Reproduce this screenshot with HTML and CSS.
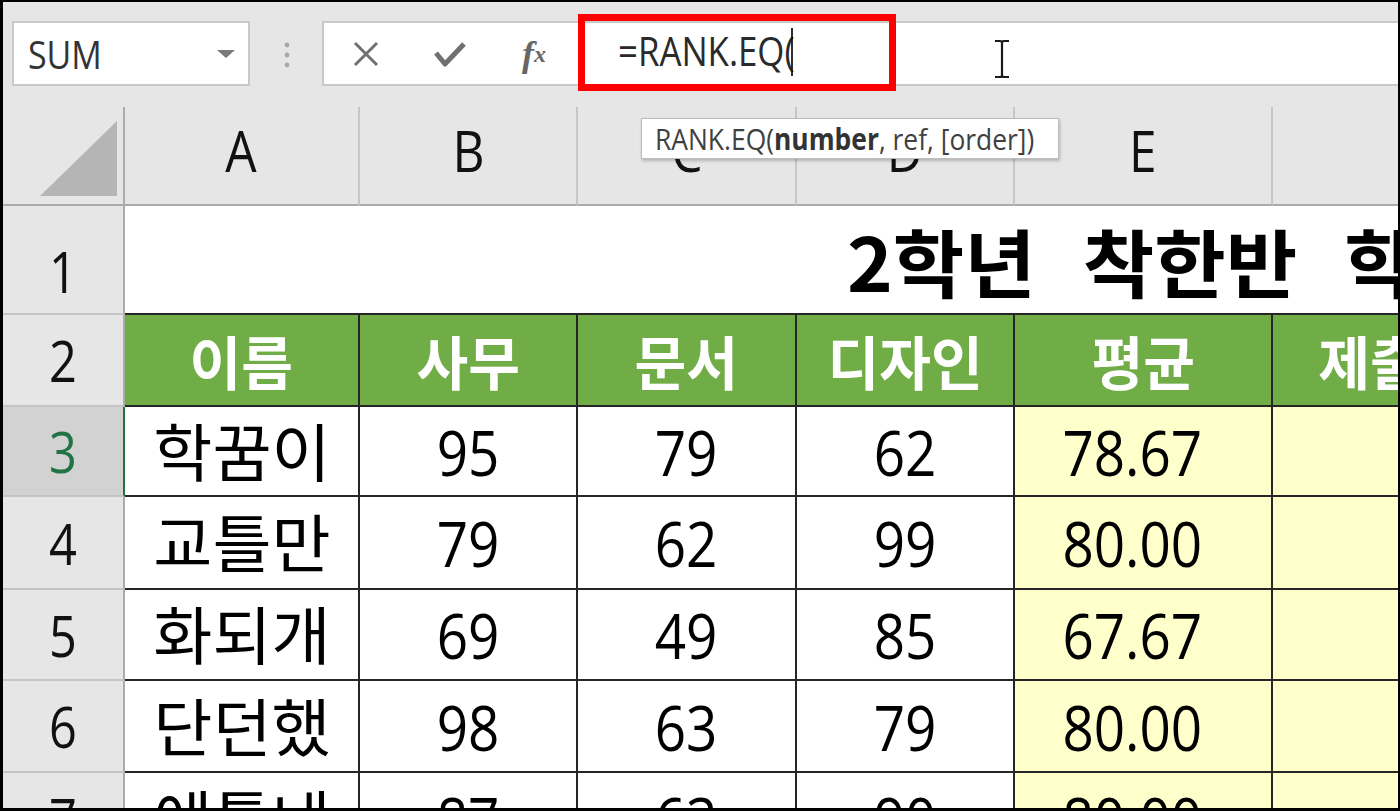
FILE: index.html
```html
<!DOCTYPE html>
<html lang="ko">
<head>
<meta charset="utf-8">
<title>RANK.EQ</title>
<link rel="stylesheet" href="styles.css">
</head>
<body>
<div class="frame">
  <div class="toolbar">
    <div class="namebox">
      <span class="t tl">SUM</span>
      <svg class="dd" width="18" height="8" viewBox="0 0 18 8"><path d="M0 0H18L9 8Z" fill="#7a7a7a"/></svg>
    </div>
    <svg class="grip" width="8" height="26" viewBox="0 0 8 26"><circle cx="4" cy="3" r="2.4"/><circle cx="4" cy="13" r="2.4"/><circle cx="4" cy="23" r="2.4"/></svg>
    <div class="fbar">
      <div class="fbtn"><svg width="28" height="26" viewBox="0 0 28 26"><path d="M3 2L25 24M25 2L3 24" stroke="#707070" stroke-width="3" fill="none"/></svg></div>
      <div class="fbtn"><svg width="34" height="28" viewBox="0 0 34 28"><path d="M3 13L12 24L31 4" stroke="#707070" stroke-width="5" fill="none" stroke-linejoin="round"/></svg></div>
      <div class="fbtn fx"><i>f</i><sub>x</sub></div>
      <div class="finput"><span class="t tl">=RANK.EQ(<span class="caret"></span></span></div>
    </div>
  </div>
  <div class="sheet">
    <div class="corner"><svg width="120" height="97" viewBox="0 0 120 97"><path d="M37 89H114V14Z" fill="#b5b5b5"/></svg></div>
    <div class="ch"><span class="t">A</span></div>
    <div class="ch"><span class="t">B</span></div>
    <div class="ch"><span class="t">C</span></div>
    <div class="ch"><span class="t">D</span></div>
    <div class="ch"><span class="t">E</span></div>
    <div class="ch"><span class="t">F</span></div>

    <div class="rh r1"><span class="t">1</span></div>
    <div class="title"><span class="tt">2학년 착한반 학생 성적표</span></div>

    <div class="rh"><span class="t">2</span></div>
    <div class="hd"><span class="t">이름</span></div>
    <div class="hd"><span class="t">사무</span></div>
    <div class="hd"><span class="t">문서</span></div>
    <div class="hd"><span class="t">디자인</span></div>
    <div class="hd"><span class="t">평균</span></div>
    <div class="hd hl"><span class="t">제출여부</span></div>

    <div class="rh sel"><span class="t">3</span></div>
    <div class="c name"><span class="t">학꿈이</span></div>
    <div class="c"><span class="t">95</span></div>
    <div class="c"><span class="t">79</span></div>
    <div class="c"><span class="t">62</span></div>
    <div class="c y avg"><span class="t">78.67</span></div>
    <div class="c y"></div>

    <div class="rh"><span class="t">4</span></div>
    <div class="c name"><span class="t">교틀만</span></div>
    <div class="c"><span class="t">79</span></div>
    <div class="c"><span class="t">62</span></div>
    <div class="c"><span class="t">99</span></div>
    <div class="c y avg"><span class="t">80.00</span></div>
    <div class="c y"></div>

    <div class="rh"><span class="t">5</span></div>
    <div class="c name"><span class="t">화되개</span></div>
    <div class="c"><span class="t">69</span></div>
    <div class="c"><span class="t">49</span></div>
    <div class="c"><span class="t">85</span></div>
    <div class="c y avg"><span class="t">67.67</span></div>
    <div class="c y"></div>

    <div class="rh"><span class="t">6</span></div>
    <div class="c name"><span class="t">단던했</span></div>
    <div class="c"><span class="t">98</span></div>
    <div class="c"><span class="t">63</span></div>
    <div class="c"><span class="t">79</span></div>
    <div class="c y avg"><span class="t">80.00</span></div>
    <div class="c y"></div>

    <div class="rh"><span class="t">7</span></div>
    <div class="c name"><span class="t">에틀네</span></div>
    <div class="c"><span class="t">87</span></div>
    <div class="c"><span class="t">63</span></div>
    <div class="c"><span class="t">90</span></div>
    <div class="c y avg"><span class="t">80.00</span></div>
    <div class="c y"></div>
  </div>

  <div class="redbox"></div>
  <div class="tip"><span class="t tl">RANK.EQ(<b>number</b>, ref, [order])</span></div>
  <svg class="ibeam" width="18" height="40" viewBox="0 0 18 40"><path d="M2 2H7Q9 2 9 4Q9 2 11 2H16M9 4V36M2 38H7Q9 38 9 36Q9 38 11 38H16" stroke="#1a1a1a" stroke-width="2.2" fill="none"/></svg>
</div>
</body>
</html>
```

FILE: styles.css
```css
* { box-sizing: border-box; }
html, body { margin: 0; padding: 0; background: #000; }
body {
  width: 1400px;
  height: 811px;
  overflow: hidden;
  font-family: "Open Sans", "Noto Sans CJK KR", sans-serif;
  color: #111;
}
.frame {
  position: relative;
  width: 1400px;
  height: 811px;
  border-style: solid;
  border-color: #000;
  border-width: 2px 2px 3px 3px;
  background: #e6e6e6;
  overflow: hidden;
  display: flex;
  flex-direction: column;
}
.t { display: inline-block; transform: scaleX(.87); white-space: nowrap; }
.tl { transform-origin: left center; }

/* toolbar */
.toolbar {
  flex: none;
  height: 105px;
  display: flex;
  align-items: flex-start;
  padding: 19px 0 0 9px;
}
.namebox {
  flex: none;
  width: 238px;
  height: 65px;
  background: #fff;
  border: 2px solid #c9c9c9;
  display: flex;
  align-items: center;
  justify-content: space-between;
  padding: 0 13px 0 14px;
  font-size: 39px;
  line-height: 1;
  color: #333;
}
.dd { flex: none; }
.grip { flex: none; margin: 21px 0 0 33px; fill: #a8a8a8; }
.fbar {
  flex: 1;
  margin-left: 31px;
  height: 65px;
  background: #fff;
  border: 2px solid #c9c9c9;
  border-right: none;
  display: flex;
  align-items: center;
}
.fbtn {
  flex: none;
  width: 84px;
  display: flex;
  justify-content: center;
  align-items: center;
}
.fx {
  font-family: "Liberation Serif", "DejaVu Serif", serif;
  color: #666;
  font-size: 36px;
  font-weight: 700;
  line-height: 1;
}
.fx i { font-style: italic; }
.fx sub { font-style: italic; font-size: 24px; vertical-align: -1px; margin-left: 0; }
.finput {
  padding-left: 42px;
  font-size: 40px;
  line-height: 1;
  color: #2a2a2a;
  display: flex;
  align-items: center;
}
.caret {
  display: inline-block;
  width: 2px;
  height: 48px;
  background: #111;
  vertical-align: middle;
  margin-left: -4px;
  margin-top: -8px;
}

/* sheet grid */
.sheet {
  flex: none;
  display: grid;
  grid-template-columns: 122px 235px 218px 219px 218px 258px 300px;
  grid-template-rows: 99px 109px 92px 90px 93px 91px 92px 92px;
  line-height: 1;
}
.corner {
  border-right: 2px solid #ababab;
  border-bottom: 2px solid #ababab;
}
.corner svg { display: block; }
.ch {
  display: flex;
  align-items: center;
  justify-content: center;
  padding-bottom: 10px;
  font-size: 57px;
  color: #111;
  border-right: 2px solid #c6c6c6;
  border-bottom: 2px solid #ababab;
}
.rh {
  display: flex;
  align-items: center;
  justify-content: center;
  font-size: 56px;
  color: #111;
  border-right: 2px solid #ababab;
  border-bottom: 2px solid #c4c4c4;
}
.rh.r1 { align-items: flex-end; padding-bottom: 14px; }
.rh.sel {
  background: #d2d2d2;
  color: #217346;
  border-right-color: #217346;
}
.title {
  grid-column: 2 / 8;
  background: #fff;
  border-bottom: 2px solid #262626;
  display: flex;
  align-items: center;
  padding-left: 722px;
  font-family: "Noto Sans CJK KR", sans-serif;
  font-weight: 700;
  font-size: 74px;
  color: #000;
  white-space: nowrap;
  overflow: hidden;
}
.tt {
  display: inline-block;
  transform: scaleX(1.05);
  transform-origin: left center;
  word-spacing: 24px;
}
.hd {
  background: #70ad47;
  color: #fff;
  font-family: "Noto Sans CJK KR", sans-serif;
  font-weight: 700;
  font-size: 58px;
  display: flex;
  align-items: center;
  justify-content: center;
  border-right: 2px solid #262626;
  border-bottom: 2px solid #262626;
  overflow: hidden;
  white-space: nowrap;
}
.hd .t { transform: scaleX(.97); }
.c {
  background: #fff;
  font-size: 63px;
  color: #000;
  display: flex;
  align-items: center;
  justify-content: center;
  border-right: 2px solid #262626;
  border-bottom: 2px solid #262626;
}
.c.name .t { transform: scaleX(1.02); }
.c.y { background: #ffffcc; }
.c.avg { padding-right: 22px; }

/* overlays */
.redbox {
  position: absolute;
  left: 575px;
  top: 12px;
  width: 318px;
  height: 77px;
  border: 7px solid #ff0000;
}
.tip {
  position: absolute;
  left: 638px;
  top: 116px;
  width: 418px;
  height: 41px;
  background: #fff;
  border: 1px solid #bdbdbd;
  box-shadow: 1px 2px 3px rgba(0, 0, 0, .22);
  display: flex;
  align-items: center;
  padding-left: 13px;
  font-size: 30px;
  line-height: 1;
  color: #404040;
}
.tip .t { transform: scaleX(.88); }
.tip b { font-weight: 700; color: #333; }
.ibeam {
  position: absolute;
  left: 990px;
  top: 37px;
}
```
